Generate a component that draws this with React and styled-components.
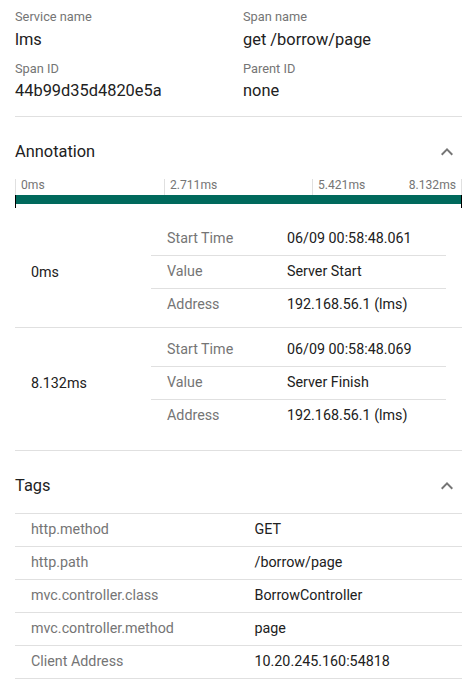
import React from "react";
import styled, { createGlobalStyle } from "styled-components";

const GlobalStyle = createGlobalStyle`
  body {
    margin: 0;
    background: #fff;
    font-family: Roboto, "Liberation Sans", Arial, sans-serif;
    color: #212121;
  }
`;

// 스팬 기본 정보
const overview = [
  { label: "Service name", value: "lms" },
  { label: "Span name", value: "get /borrow/page" },
  { label: "Span ID", value: "44b99d35d4820e5a" },
  { label: "Parent ID", value: "none" },
];

const annotations = [
  {
    time: "0ms",
    rows: [
      ["Start Time", "06/09 00:58:48.061"],
      ["Value", "Server Start"],
      ["Address", "192.168.56.1 (lms)"],
    ],
  },
  {
    time: "8.132ms",
    rows: [
      ["Start Time", "06/09 00:58:48.069"],
      ["Value", "Server Finish"],
      ["Address", "192.168.56.1 (lms)"],
    ],
  },
];

const tags = [
  ["http.method", "GET"],
  ["http.path", "/borrow/page"],
  ["mvc.controller.class", "BorrowController"],
  ["mvc.controller.method", "page"],
  ["Client Address", "10.20.245.160:54818"],
];

function ExpandLess() {
  return (
    <svg width="24" height="24" viewBox="0 0 24 24">
      <path
        d="M12 8l-6 6 1.41 1.41L12 10.83l4.59 4.58L18 14z"
        fill="#757575"
      />
    </svg>
  );
}

function App() {
  return (
    <Panel>
      <GlobalStyle />
      <Overview>
        {overview.map((item) => (
          <Field key={item.label}>
            <Label>{item.label}</Label>
            <Value>{item.value}</Value>
          </Field>
        ))}
      </Overview>

      <Section>
        <SectionHeader>
          <span>Annotation</span>
          <ExpandLess />
        </SectionHeader>
        <Timeline>
          <TickRow>
            <Tick>0ms</Tick>
            <Tick>2.711ms</Tick>
            <Tick $last>
              <span>5.421ms</span>
              <span>8.132ms</span>
            </Tick>
          </TickRow>
          <Track>
            <Bar />
          </Track>
        </Timeline>
        <Groups>
          {annotations.map((group) => (
            <Group key={group.time}>
              <GroupTime>{group.time}</GroupTime>
              <InnerTable>
                {group.rows.map(([k, v]) => (
                  <InnerRow key={k}>
                    <Key>{k}</Key>
                    <Val>{v}</Val>
                  </InnerRow>
                ))}
              </InnerTable>
            </Group>
          ))}
        </Groups>
      </Section>

      <Section $noBorder>
        <SectionHeader>
          <span>Tags</span>
          <ExpandLess />
        </SectionHeader>
        <TagTable>
          {tags.map(([k, v]) => (
            <TagRow key={k}>
              <Key>{k}</Key>
              <Val>{v}</Val>
            </TagRow>
          ))}
        </TagTable>
      </Section>
    </Panel>
  );
}

const Panel = styled.div`
  padding: 0 7px 0 15px;
  width: 469px;
  box-sizing: border-box;
`;

const Overview = styled.div`
  display: grid;
  grid-template-columns: 228px 1fr;
  row-gap: 9px;
  padding: 9px 0 13px;
  border-bottom: 1px solid #e0e0e0;
`;

const Field = styled.div`
  display: flex;
  flex-direction: column;
`;

const Label = styled.div`
  font-size: 12.8px;
  line-height: 16px;
  color: #757575;
`;

const Value = styled.div`
  margin-top: 2.5px;
  font-size: 16.4px;
  line-height: 24px;
  color: #212121;
`;

const Section = styled.div`
  padding: 23px 0 12px;
  border-bottom: ${(p) => (p.$noBorder ? "none" : "1px solid #e0e0e0")};
`;

const SectionHeader = styled.div`
  display: flex;
  justify-content: space-between;
  align-items: center;
  height: 24px;
  padding-right: 3px;
  font-size: 16.4px;
  line-height: 24px;
  color: #212121;

  svg {
    display: block;
  }
`;

const Timeline = styled.div`
  margin-top: 15px;
`;

const TickRow = styled.div`
  display: grid;
  grid-template-columns: 149px 148px 1fr;
  height: 16px;
`;

const Tick = styled.div`
  display: flex;
  justify-content: space-between;
  padding: 0 5px;
  border-left: 1px solid #e0e0e0;
  border-right: ${(p) => (p.$last ? "1px solid #e0e0e0" : "none")};
  font-size: 12.1px;
  line-height: 13px;
  color: #757575;
`;

const Track = styled.div`
  margin-top: -4px;
  padding: 4px 0;
  border-left: 1px solid #000;
  border-right: 1px solid #000;
`;

const Bar = styled.div`
  height: 9px;
  background: #00695c;
`;

const Groups = styled.div`
  margin-top: 9px;
`;

const Group = styled.div`
  display: flex;
  align-items: center;
  padding: 6px 0;

  & + & {
    border-top: 1px solid #e0e0e0;
  }
`;

const GroupTime = styled.div`
  width: 136px;
  box-sizing: border-box;
  padding-left: 16px;
  font-size: 14.3px;
  color: #212121;
`;

const InnerTable = styled.div`
  width: 295px;
`;

const InnerRow = styled.div`
  display: grid;
  grid-template-columns: 120px 1fr;
  align-items: center;
  box-sizing: border-box;
  height: 32px;
  padding-bottom: 2px;

  & + & {
    border-top: 1px solid #e0e0e0;
    height: 33px;
  }
`;

const Key = styled.div`
  padding-left: 16px;
  font-size: 14.3px;
  color: #757575;
`;

const Val = styled.div`
  padding-left: 16px;
  font-size: 14.3px;
  color: #212121;
`;

const TagTable = styled.div`
  margin-top: 15px;
  border-top: 1px solid #e0e0e0;
`;

const TagRow = styled.div`
  display: grid;
  grid-template-columns: 1fr 1fr;
  align-items: center;
  box-sizing: border-box;
  height: 33px;
  padding-bottom: 2px;
  border-bottom: 1px solid #e0e0e0;
`;

export default App;
